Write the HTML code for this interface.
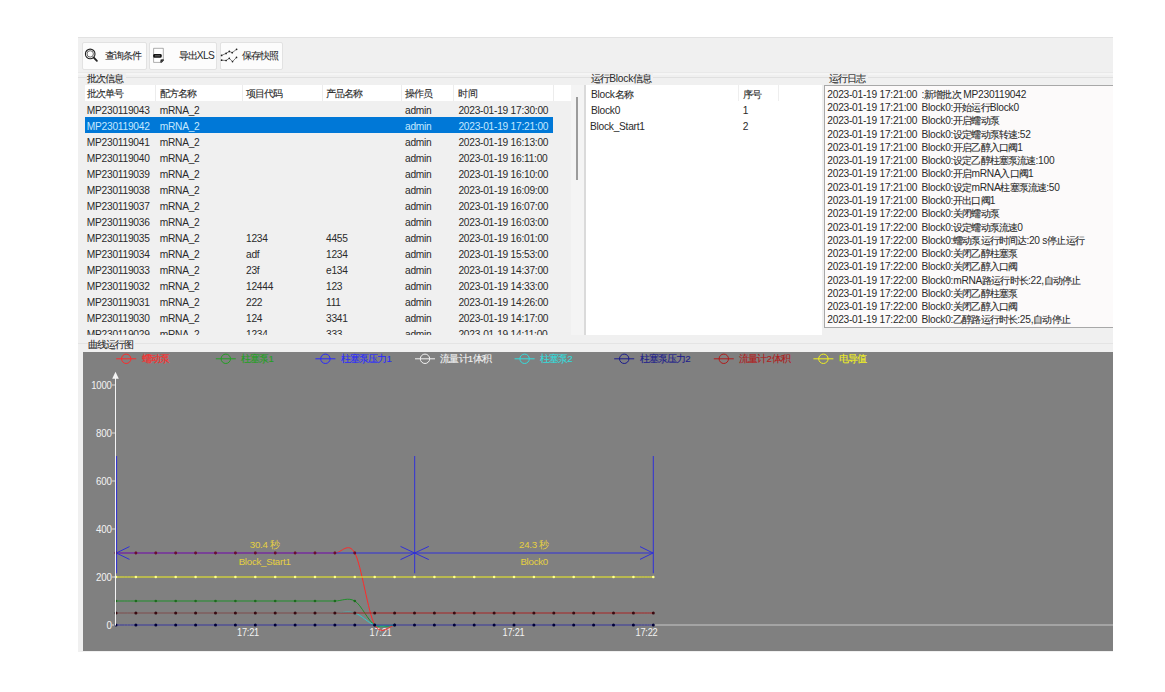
<!DOCTYPE html>
<html><head><meta charset="utf-8"><style>
html,body{margin:0;padding:0;background:#fff;width:1165px;height:692px;overflow:hidden;position:relative}
body{font-family:"Liberation Sans",sans-serif;font-size:10.2px;color:#2a2a2a;letter-spacing:-0.25px}
.t{}
.a{position:absolute}
.t{position:absolute;white-space:nowrap;line-height:12px;height:12px}
.c{font-size:10px;letter-spacing:-0.85px;-webkit-text-stroke:0.1px currentColor}
.win{position:absolute;left:78px;top:37px;width:1035px;height:615px;background:#f0f0f0}
.btn{position:absolute;top:41.5px;height:28px;background:#fcfcfc;border:1px solid #e2e2e2;border-radius:2px;box-sizing:border-box}
.hsep{position:absolute;top:85px;height:16px;width:1px;background:#ececec}
</style></head><body>
<div class="win"></div>
<div class="a" style="left:78px;top:37px;width:1035px;height:1px;background:#e2e2e2"></div>

<div class="btn" style="left:81.5px;width:65px"></div>
<div class="btn" style="left:148.6px;width:68.6px"></div>
<div class="btn" style="left:219.5px;width:63.5px"></div>
<div class="t" style="left:104.7px;top:49.9px;"><span class="c">查询条件</span></div>
<div class="t" style="left:178.5px;top:49.9px;letter-spacing:-0.6px"><span class="c">导出</span>XLS</div>
<div class="t" style="left:241.6px;top:49.9px;"><span class="c">保存快照</span></div>
<svg class="a" style="left:0;top:0" width="1165" height="692">
<circle cx="90.2" cy="53.9" r="4.8" fill="none" stroke="#222" stroke-width="1.1"/>
<circle cx="90.2" cy="53.9" r="3.2" fill="none" stroke="#444" stroke-width="0.8"/>
<line x1="93.8" y1="57.6" x2="96.9" y2="60.9" stroke="#222" stroke-width="1.8" stroke-linecap="round"/>
<path d="M153.6 48.3 H163.3 V59.3 L160.3 62.4 H153.6 Z" fill="#fff" stroke="#777" stroke-width="0.6"/>
<rect x="153.2" y="54" width="8.5" height="3.7" rx="1.2" fill="#161616"/>
<rect x="155" y="55.4" width="5" height="0.9" fill="#777"/>
<path d="M160.2 62.7 L163.7 59 L163.7 60.5 L161.6 62.7 Z" fill="#111"/>
<path d="M160.3 62.5 L163.4 59.3 L160.6 59.6 Z" fill="#222"/>
<polyline points="221.6,55.4 226.1,53.4 229.3,51.4 232.2,52.7 236.6,49.3" fill="none" stroke="#555" stroke-width="0.75"/>
<polyline points="221.6,60.2 226.1,60.5 229.3,58.3 232.5,61.6 236.5,57.4" fill="none" stroke="#555" stroke-width="0.75"/>
<circle cx="221.6" cy="55.4" r="0.85" fill="#222"/><circle cx="226.1" cy="53.4" r="0.85" fill="#222"/><circle cx="229.3" cy="51.4" r="0.85" fill="#222"/><circle cx="232.2" cy="52.7" r="0.85" fill="#222"/><circle cx="236.6" cy="49.3" r="0.85" fill="#222"/><circle cx="221.6" cy="60.2" r="0.85" fill="#222"/><circle cx="226.1" cy="60.5" r="0.85" fill="#222"/><circle cx="229.3" cy="58.3" r="0.85" fill="#222"/><circle cx="232.5" cy="61.6" r="0.85" fill="#222"/><circle cx="236.5" cy="57.4" r="0.85" fill="#222"/>
</svg>
<div class="a" style="left:78px;top:72px;width:1035px;height:1px;background:#e9e9e9"></div>
<div class="a" style="left:78px;top:73px;width:1035px;height:2px;background:#f5f5f5"></div>
<div class="a" style="left:78px;top:77px;width:1035px;height:1px;background:#e0e0e0"></div>
<div class="a" style="left:571px;top:85px;width:13px;height:250px;background:#f4f4f4"></div>
<div class="a" style="left:584px;top:85px;width:1.5px;height:250px;background:#dadada"></div>
<div class="a" style="left:78px;top:343px;width:1035px;height:1px;background:#e4e4e4"></div>
<div class="t" style="left:87px;top:72.6px;background:#f0f0f0;padding-right:2px"><span class="c">批次信息</span></div>
<div class="t" style="left:591px;top:73.1px;background:#f0f0f0;padding-right:2px"><span class="c">运行</span>Block<span class="c">信息</span></div>
<div class="t" style="left:829px;top:73.1px;background:#f0f0f0;padding-right:2px"><span class="c">运行日志</span></div>
<div class="a" style="left:85px;top:85px;width:486px;height:16px;background:#fff"></div>
<div class="hsep" style="left:155px"></div>
<div class="hsep" style="left:241.5px"></div>
<div class="hsep" style="left:321.5px"></div>
<div class="hsep" style="left:400.5px"></div>
<div class="hsep" style="left:453.2px"></div>
<div class="hsep" style="left:553px"></div>
<div class="t" style="left:86.8px;top:88.1px;"><span class="c">批次单号</span></div>
<div class="t" style="left:159.7px;top:88.1px;"><span class="c">配方名称</span></div>
<div class="t" style="left:246px;top:88.1px;"><span class="c">项目代码</span></div>
<div class="t" style="left:326px;top:88.1px;"><span class="c">产品名称</span></div>
<div class="t" style="left:405px;top:88.1px;"><span class="c">操作员</span></div>
<div class="t" style="left:458.4px;top:88.1px;"><span class="c">时间</span></div>
<div class="a" style="left:0;top:101px;width:1165px;height:234px;overflow:hidden">
<div class="t" style="left:86.8px;top:3.6px;">MP230119043</div>
<div class="t" style="left:159.7px;top:3.6px;">mRNA_2</div>
<div class="t" style="left:405px;top:3.6px;">admin</div>
<div class="t" style="left:458.4px;top:3.6px;">2023-01-19 17:30:00</div>
<div class="a" style="left:85px;top:16px;width:468.4px;height:16px;background:#0078d7"></div>
<div class="t" style="left:86.8px;top:19.6px;color:#c4e8ff;">MP230119042</div>
<div class="t" style="left:159.7px;top:19.6px;color:#c4e8ff;">mRNA_2</div>
<div class="t" style="left:405px;top:19.6px;color:#c4e8ff;">admin</div>
<div class="t" style="left:458.4px;top:19.6px;color:#c4e8ff;">2023-01-19 17:21:00</div>
<div class="t" style="left:86.8px;top:35.6px;">MP230119041</div>
<div class="t" style="left:159.7px;top:35.6px;">mRNA_2</div>
<div class="t" style="left:405px;top:35.6px;">admin</div>
<div class="t" style="left:458.4px;top:35.6px;">2023-01-19 16:13:00</div>
<div class="t" style="left:86.8px;top:51.6px;">MP230119040</div>
<div class="t" style="left:159.7px;top:51.6px;">mRNA_2</div>
<div class="t" style="left:405px;top:51.6px;">admin</div>
<div class="t" style="left:458.4px;top:51.6px;">2023-01-19 16:11:00</div>
<div class="t" style="left:86.8px;top:67.6px;">MP230119039</div>
<div class="t" style="left:159.7px;top:67.6px;">mRNA_2</div>
<div class="t" style="left:405px;top:67.6px;">admin</div>
<div class="t" style="left:458.4px;top:67.6px;">2023-01-19 16:10:00</div>
<div class="t" style="left:86.8px;top:83.6px;">MP230119038</div>
<div class="t" style="left:159.7px;top:83.6px;">mRNA_2</div>
<div class="t" style="left:405px;top:83.6px;">admin</div>
<div class="t" style="left:458.4px;top:83.6px;">2023-01-19 16:09:00</div>
<div class="t" style="left:86.8px;top:99.6px;">MP230119037</div>
<div class="t" style="left:159.7px;top:99.6px;">mRNA_2</div>
<div class="t" style="left:405px;top:99.6px;">admin</div>
<div class="t" style="left:458.4px;top:99.6px;">2023-01-19 16:07:00</div>
<div class="t" style="left:86.8px;top:115.6px;">MP230119036</div>
<div class="t" style="left:159.7px;top:115.6px;">mRNA_2</div>
<div class="t" style="left:405px;top:115.6px;">admin</div>
<div class="t" style="left:458.4px;top:115.6px;">2023-01-19 16:03:00</div>
<div class="t" style="left:86.8px;top:131.6px;">MP230119035</div>
<div class="t" style="left:159.7px;top:131.6px;">mRNA_2</div>
<div class="t" style="left:246px;top:131.6px;">1234</div>
<div class="t" style="left:326px;top:131.6px;">4455</div>
<div class="t" style="left:405px;top:131.6px;">admin</div>
<div class="t" style="left:458.4px;top:131.6px;">2023-01-19 16:01:00</div>
<div class="t" style="left:86.8px;top:147.6px;">MP230119034</div>
<div class="t" style="left:159.7px;top:147.6px;">mRNA_2</div>
<div class="t" style="left:246px;top:147.6px;">adf</div>
<div class="t" style="left:326px;top:147.6px;">1234</div>
<div class="t" style="left:405px;top:147.6px;">admin</div>
<div class="t" style="left:458.4px;top:147.6px;">2023-01-19 15:53:00</div>
<div class="t" style="left:86.8px;top:163.6px;">MP230119033</div>
<div class="t" style="left:159.7px;top:163.6px;">mRNA_2</div>
<div class="t" style="left:246px;top:163.6px;">23f</div>
<div class="t" style="left:326px;top:163.6px;">e134</div>
<div class="t" style="left:405px;top:163.6px;">admin</div>
<div class="t" style="left:458.4px;top:163.6px;">2023-01-19 14:37:00</div>
<div class="t" style="left:86.8px;top:179.6px;">MP230119032</div>
<div class="t" style="left:159.7px;top:179.6px;">mRNA_2</div>
<div class="t" style="left:246px;top:179.6px;">12444</div>
<div class="t" style="left:326px;top:179.6px;">123</div>
<div class="t" style="left:405px;top:179.6px;">admin</div>
<div class="t" style="left:458.4px;top:179.6px;">2023-01-19 14:33:00</div>
<div class="t" style="left:86.8px;top:195.6px;">MP230119031</div>
<div class="t" style="left:159.7px;top:195.6px;">mRNA_2</div>
<div class="t" style="left:246px;top:195.6px;">222</div>
<div class="t" style="left:326px;top:195.6px;">111</div>
<div class="t" style="left:405px;top:195.6px;">admin</div>
<div class="t" style="left:458.4px;top:195.6px;">2023-01-19 14:26:00</div>
<div class="t" style="left:86.8px;top:211.6px;">MP230119030</div>
<div class="t" style="left:159.7px;top:211.6px;">mRNA_2</div>
<div class="t" style="left:246px;top:211.6px;">124</div>
<div class="t" style="left:326px;top:211.6px;">3341</div>
<div class="t" style="left:405px;top:211.6px;">admin</div>
<div class="t" style="left:458.4px;top:211.6px;">2023-01-19 14:17:00</div>
<div class="t" style="left:86.8px;top:227.6px;">MP230119029</div>
<div class="t" style="left:159.7px;top:227.6px;">mRNA_2</div>
<div class="t" style="left:246px;top:227.6px;">1234</div>
<div class="t" style="left:326px;top:227.6px;">333</div>
<div class="t" style="left:405px;top:227.6px;">admin</div>
<div class="t" style="left:458.4px;top:227.6px;">2023-01-19 14:11:00</div>
</div>
<div class="a" style="left:576.3px;top:97px;width:1.7px;height:83px;background:#9c9c9c"></div>
<div class="a" style="left:585.7px;top:85px;width:236px;height:250px;background:#fff"></div>
<div class="a" style="left:738.4px;top:85px;width:1px;height:16px;background:#eee"></div>
<div class="a" style="left:778.3px;top:85px;width:1px;height:16px;background:#eee"></div>
<div class="t" style="left:591px;top:88.6px;">Block<span class="c">名称</span></div>
<div class="t" style="left:742.8px;top:88.6px;"><span class="c">序号</span></div>
<div class="t" style="left:591px;top:104.6px;">Block0</div>
<div class="t" style="left:742.8px;top:104.6px;">1</div>
<div class="t" style="left:590px;top:120.6px;">Block_Start1</div>
<div class="t" style="left:742.8px;top:120.6px;">2</div>
<div class="a" style="left:824px;top:85px;width:289px;height:242.5px;background:#fcfafa;border-left:1px solid #a8a8a8;border-top:1px solid #a8a8a8;border-bottom:1px solid #a8a8a8;box-sizing:border-box"></div>
<div class="t" style="left:827.3px;top:88.8px;">2023-01-19 17:21:00</div>
<div class="t" style="left:921.5px;top:88.8px;">:<span class="c">新增批次</span> MP230119042</div>
<div class="t" style="left:827.3px;top:102.1px;">2023-01-19 17:21:00</div>
<div class="t" style="left:921.5px;top:102.1px;">Block0:<span class="c">开始运行</span>Block0</div>
<div class="t" style="left:827.3px;top:115.3px;">2023-01-19 17:21:00</div>
<div class="t" style="left:921.5px;top:115.3px;">Block0:<span class="c">开启蠕动泵</span></div>
<div class="t" style="left:827.3px;top:128.6px;">2023-01-19 17:21:00</div>
<div class="t" style="left:921.5px;top:128.6px;">Block0:<span class="c">设定蠕动泵转速</span>:52</div>
<div class="t" style="left:827.3px;top:141.9px;">2023-01-19 17:21:00</div>
<div class="t" style="left:921.5px;top:141.9px;">Block0:<span class="c">开启乙醇入口阀</span>1</div>
<div class="t" style="left:827.3px;top:155.2px;">2023-01-19 17:21:00</div>
<div class="t" style="left:921.5px;top:155.2px;">Block0:<span class="c">设定乙醇柱塞泵流速</span>:100</div>
<div class="t" style="left:827.3px;top:168.4px;">2023-01-19 17:21:00</div>
<div class="t" style="left:921.5px;top:168.4px;">Block0:<span class="c">开启</span>mRNA<span class="c">入口阀</span>1</div>
<div class="t" style="left:827.3px;top:181.7px;">2023-01-19 17:21:00</div>
<div class="t" style="left:921.5px;top:181.7px;">Block0:<span class="c">设定</span>mRNA<span class="c">柱塞泵流速</span>:50</div>
<div class="t" style="left:827.3px;top:195.0px;">2023-01-19 17:21:00</div>
<div class="t" style="left:921.5px;top:195.0px;">Block0:<span class="c">开出口阀</span>1</div>
<div class="t" style="left:827.3px;top:208.2px;">2023-01-19 17:22:00</div>
<div class="t" style="left:921.5px;top:208.2px;">Block0:<span class="c">关闭蠕动泵</span></div>
<div class="t" style="left:827.3px;top:221.5px;">2023-01-19 17:22:00</div>
<div class="t" style="left:921.5px;top:221.5px;">Block0:<span class="c">设定蠕动泵流速</span>0</div>
<div class="t" style="left:827.3px;top:234.8px;">2023-01-19 17:22:00</div>
<div class="t" style="left:921.5px;top:234.8px;">Block0:<span class="c">蠕动泵运行时间达</span>:20 s<span class="c">停止运行</span></div>
<div class="t" style="left:827.3px;top:248.0px;">2023-01-19 17:22:00</div>
<div class="t" style="left:921.5px;top:248.0px;">Block0:<span class="c">关闭乙醇柱塞泵</span></div>
<div class="t" style="left:827.3px;top:261.3px;">2023-01-19 17:22:00</div>
<div class="t" style="left:921.5px;top:261.3px;">Block0:<span class="c">关闭乙醇入口阀</span></div>
<div class="t" style="left:827.3px;top:274.6px;">2023-01-19 17:22:00</div>
<div class="t" style="left:921.5px;top:274.6px;">Block0:mRNA<span class="c">路运行时长</span>:22,<span class="c">自动停止</span></div>
<div class="t" style="left:827.3px;top:287.8px;">2023-01-19 17:22:00</div>
<div class="t" style="left:921.5px;top:287.8px;">Block0:<span class="c">关闭乙醇柱塞泵</span></div>
<div class="t" style="left:827.3px;top:301.1px;">2023-01-19 17:22:00</div>
<div class="t" style="left:921.5px;top:301.1px;">Block0:<span class="c">关闭乙醇入口阀</span></div>
<div class="t" style="left:827.3px;top:314.4px;">2023-01-19 17:22:00</div>
<div class="t" style="left:921.5px;top:314.4px;">Block0:<span class="c">乙醇路运行时长</span>:25,<span class="c">自动停止</span></div>
<div class="t" style="left:87.7px;top:339.1px;background:#f0f0f0;padding-right:2px"><span class="c">曲线运行图</span></div>
<div class="a" style="left:83px;top:351.5px;width:1030px;height:299px;background:#808080"></div>
<svg class="a" style="left:0;top:0" width="1165" height="692">
<style>.c{font-size:10px;letter-spacing:-0.85px}</style>
<line x1="116.2" y1="358.8" x2="136.2" y2="358.8" stroke="#ff2a2a" stroke-width="1"/>
<circle cx="126.2" cy="358.8" r="4.7" fill="none" stroke="#ff2a2a" stroke-width="1"/>
<text x="141.5" y="362.0" fill="#ff2a2a" stroke="#ff2a2a" stroke-width="0.12" font-size="9.7"><tspan class="c">蠕动泵</tspan></text>
<line x1="215.8" y1="358.8" x2="235.8" y2="358.8" stroke="#22a022" stroke-width="1"/>
<circle cx="225.8" cy="358.8" r="4.7" fill="none" stroke="#22a022" stroke-width="1"/>
<text x="241.1" y="362.0" fill="#22a022" stroke="#22a022" stroke-width="0.12" font-size="9.7"><tspan class="c">柱塞泵</tspan>1</text>
<line x1="315.4" y1="358.8" x2="335.4" y2="358.8" stroke="#2a2aff" stroke-width="1"/>
<circle cx="325.4" cy="358.8" r="4.7" fill="none" stroke="#2a2aff" stroke-width="1"/>
<text x="340.7" y="362.0" fill="#2a2aff" stroke="#2a2aff" stroke-width="0.12" font-size="9.7"><tspan class="c">柱塞泵压力</tspan>1</text>
<line x1="415.0" y1="358.8" x2="435.0" y2="358.8" stroke="#f2f2f2" stroke-width="1"/>
<circle cx="425.0" cy="358.8" r="4.7" fill="none" stroke="#f2f2f2" stroke-width="1"/>
<text x="440.3" y="362.0" fill="#f2f2f2" stroke="#f2f2f2" stroke-width="0.12" font-size="9.7"><tspan class="c">流量计</tspan>1<tspan class="c">体积</tspan></text>
<line x1="514.6" y1="358.8" x2="534.6" y2="358.8" stroke="#33dddd" stroke-width="1"/>
<circle cx="524.6" cy="358.8" r="4.7" fill="none" stroke="#33dddd" stroke-width="1"/>
<text x="539.9" y="362.0" fill="#33dddd" stroke="#33dddd" stroke-width="0.12" font-size="9.7"><tspan class="c">柱塞泵</tspan>2</text>
<line x1="614.2" y1="358.8" x2="634.2" y2="358.8" stroke="#1c1c8c" stroke-width="1"/>
<circle cx="624.2" cy="358.8" r="4.7" fill="none" stroke="#1c1c8c" stroke-width="1"/>
<text x="639.5" y="362.0" fill="#1c1c8c" stroke="#1c1c8c" stroke-width="0.12" font-size="9.7"><tspan class="c">柱塞泵压力</tspan>2</text>
<line x1="713.8" y1="358.8" x2="733.8" y2="358.8" stroke="#b01c1c" stroke-width="1"/>
<circle cx="723.8" cy="358.8" r="4.7" fill="none" stroke="#b01c1c" stroke-width="1"/>
<text x="739.1" y="362.0" fill="#b01c1c" stroke="#b01c1c" stroke-width="0.12" font-size="9.7"><tspan class="c">流量计</tspan>2<tspan class="c">体积</tspan></text>
<line x1="813.4" y1="358.8" x2="833.4" y2="358.8" stroke="#f0f020" stroke-width="1"/>
<circle cx="823.4" cy="358.8" r="4.7" fill="none" stroke="#f0f020" stroke-width="1"/>
<text x="838.7" y="362.0" fill="#f0f020" stroke="#f0f020" stroke-width="0.12" font-size="9.7"><tspan class="c">电导值</tspan></text>
<path d="M115.5 371.7 L112.2 378.8 L118.8 378.8 Z" fill="#f4f4f4"/>
<line x1="115.5" y1="625" x2="1113" y2="625" stroke="#c8c8c8" stroke-width="1.2"/>
<line x1="112" y1="625" x2="115.5" y2="625" stroke="#d8d8d8" stroke-width="1"/>
<text x="106.4" y="628.9" fill="#f2f2f2" font-size="10.6" textLength="5.2" lengthAdjust="spacingAndGlyphs">0</text>
<line x1="112" y1="577" x2="115.5" y2="577" stroke="#d8d8d8" stroke-width="1"/>
<text x="96.0" y="580.9" fill="#f2f2f2" font-size="10.6" textLength="15.6" lengthAdjust="spacingAndGlyphs">200</text>
<line x1="112" y1="529" x2="115.5" y2="529" stroke="#d8d8d8" stroke-width="1"/>
<text x="96.0" y="532.9" fill="#f2f2f2" font-size="10.6" textLength="15.6" lengthAdjust="spacingAndGlyphs">400</text>
<line x1="112" y1="481" x2="115.5" y2="481" stroke="#d8d8d8" stroke-width="1"/>
<text x="96.0" y="484.9" fill="#f2f2f2" font-size="10.6" textLength="15.6" lengthAdjust="spacingAndGlyphs">600</text>
<line x1="112" y1="433" x2="115.5" y2="433" stroke="#d8d8d8" stroke-width="1"/>
<text x="96.0" y="436.9" fill="#f2f2f2" font-size="10.6" textLength="15.6" lengthAdjust="spacingAndGlyphs">800</text>
<line x1="112" y1="385" x2="115.5" y2="385" stroke="#d8d8d8" stroke-width="1"/>
<text x="91.2" y="388.9" fill="#f2f2f2" font-size="10.6" textLength="20.4" lengthAdjust="spacingAndGlyphs">1000</text>
<text x="237.0" y="636.1" fill="#f2f2f2" font-size="10.6" textLength="22" lengthAdjust="spacingAndGlyphs">17:21</text>
<text x="369.5" y="636.1" fill="#f2f2f2" font-size="10.6" textLength="22" lengthAdjust="spacingAndGlyphs">17:21</text>
<text x="502.5" y="636.1" fill="#f2f2f2" font-size="10.6" textLength="22" lengthAdjust="spacingAndGlyphs">17:21</text>
<text x="635.5" y="636.1" fill="#f2f2f2" font-size="10.6" textLength="22" lengthAdjust="spacingAndGlyphs">17:22</text>
<path d="M116.00 553.00 C119.32 553.00 129.27 553.00 135.90 553.00 C142.53 553.00 149.17 553.00 155.80 553.00 C162.43 553.00 169.07 553.00 175.70 553.00 C182.33 553.00 188.97 553.00 195.60 553.00 C202.23 553.00 208.87 553.00 215.50 553.00 C222.13 553.00 228.77 553.00 235.40 553.00 C242.03 553.00 248.67 553.00 255.30 553.00 C261.93 553.00 268.57 553.00 275.20 553.00 C281.83 553.00 288.47 553.00 295.10 553.00 C301.73 553.00 308.37 553.00 315.00 553.00 C321.63 553.00 328.27 553.00 334.90 553.00 C341.53 553.00 348.17 541.00 354.80 553.00 C361.43 565.00 368.07 613.00 374.70 625.00 C381.33 637.00 391.28 625.00 394.60 625.00" fill="none" stroke="#ff2a2a" stroke-width="1.0"/>
<circle cx="116.00" cy="553.00" r="1.3" fill="#7a1020"/>
<circle cx="135.90" cy="553.00" r="1.3" fill="#7a1020"/>
<circle cx="155.80" cy="553.00" r="1.3" fill="#7a1020"/>
<circle cx="175.70" cy="553.00" r="1.3" fill="#7a1020"/>
<circle cx="195.60" cy="553.00" r="1.3" fill="#7a1020"/>
<circle cx="215.50" cy="553.00" r="1.3" fill="#7a1020"/>
<circle cx="235.40" cy="553.00" r="1.3" fill="#7a1020"/>
<circle cx="255.30" cy="553.00" r="1.3" fill="#7a1020"/>
<circle cx="275.20" cy="553.00" r="1.3" fill="#7a1020"/>
<circle cx="295.10" cy="553.00" r="1.3" fill="#7a1020"/>
<circle cx="315.00" cy="553.00" r="1.3" fill="#7a1020"/>
<circle cx="334.90" cy="553.00" r="1.3" fill="#7a1020"/>
<circle cx="354.80" cy="553.00" r="1.3" fill="#7a1020"/>
<circle cx="374.70" cy="625.00" r="1.3" fill="#7a1020"/>
<circle cx="394.60" cy="625.00" r="1.3" fill="#7a1020"/>
<path d="M116.00 601.00 C119.32 601.00 129.27 601.00 135.90 601.00 C142.53 601.00 149.17 601.00 155.80 601.00 C162.43 601.00 169.07 601.00 175.70 601.00 C182.33 601.00 188.97 601.00 195.60 601.00 C202.23 601.00 208.87 601.00 215.50 601.00 C222.13 601.00 228.77 601.00 235.40 601.00 C242.03 601.00 248.67 601.00 255.30 601.00 C261.93 601.00 268.57 601.00 275.20 601.00 C281.83 601.00 288.47 601.00 295.10 601.00 C301.73 601.00 308.37 601.00 315.00 601.00 C321.63 601.00 328.27 601.00 334.90 601.00 C341.53 601.00 348.17 597.00 354.80 601.00 C361.43 605.00 368.07 621.00 374.70 625.00 C381.33 629.00 391.28 625.00 394.60 625.00" fill="none" stroke="#1f8f2a" stroke-width="1.0"/>
<circle cx="116.00" cy="601.00" r="1.3" fill="#1c6a1c"/>
<circle cx="135.90" cy="601.00" r="1.3" fill="#1c6a1c"/>
<circle cx="155.80" cy="601.00" r="1.3" fill="#1c6a1c"/>
<circle cx="175.70" cy="601.00" r="1.3" fill="#1c6a1c"/>
<circle cx="195.60" cy="601.00" r="1.3" fill="#1c6a1c"/>
<circle cx="215.50" cy="601.00" r="1.3" fill="#1c6a1c"/>
<circle cx="235.40" cy="601.00" r="1.3" fill="#1c6a1c"/>
<circle cx="255.30" cy="601.00" r="1.3" fill="#1c6a1c"/>
<circle cx="275.20" cy="601.00" r="1.3" fill="#1c6a1c"/>
<circle cx="295.10" cy="601.00" r="1.3" fill="#1c6a1c"/>
<circle cx="315.00" cy="601.00" r="1.3" fill="#1c6a1c"/>
<circle cx="334.90" cy="601.00" r="1.3" fill="#1c6a1c"/>
<circle cx="354.80" cy="601.00" r="1.3" fill="#1c6a1c"/>
<circle cx="374.70" cy="625.00" r="1.3" fill="#1c6a1c"/>
<circle cx="394.60" cy="625.00" r="1.3" fill="#1c6a1c"/>
<path d="M116.00 613.00 C119.32 613.00 129.27 613.00 135.90 613.00 C142.53 613.00 149.17 613.00 155.80 613.00 C162.43 613.00 169.07 613.00 175.70 613.00 C182.33 613.00 188.97 613.00 195.60 613.00 C202.23 613.00 208.87 613.00 215.50 613.00 C222.13 613.00 228.77 613.00 235.40 613.00 C242.03 613.00 248.67 613.00 255.30 613.00 C261.93 613.00 268.57 613.00 275.20 613.00 C281.83 613.00 288.47 613.00 295.10 613.00 C301.73 613.00 308.37 613.00 315.00 613.00 C321.63 613.00 328.27 613.00 334.90 613.00 C341.53 613.00 348.17 611.00 354.80 613.00 C361.43 615.00 368.07 623.00 374.70 625.00 C381.33 627.00 391.28 625.00 394.60 625.00" fill="none" stroke="#2ccfcf" stroke-width="1.0"/>
<circle cx="116.00" cy="613.00" r="1.3" fill="#1a8a8a"/>
<circle cx="135.90" cy="613.00" r="1.3" fill="#1a8a8a"/>
<circle cx="155.80" cy="613.00" r="1.3" fill="#1a8a8a"/>
<circle cx="175.70" cy="613.00" r="1.3" fill="#1a8a8a"/>
<circle cx="195.60" cy="613.00" r="1.3" fill="#1a8a8a"/>
<circle cx="215.50" cy="613.00" r="1.3" fill="#1a8a8a"/>
<circle cx="235.40" cy="613.00" r="1.3" fill="#1a8a8a"/>
<circle cx="255.30" cy="613.00" r="1.3" fill="#1a8a8a"/>
<circle cx="275.20" cy="613.00" r="1.3" fill="#1a8a8a"/>
<circle cx="295.10" cy="613.00" r="1.3" fill="#1a8a8a"/>
<circle cx="315.00" cy="613.00" r="1.3" fill="#1a8a8a"/>
<circle cx="334.90" cy="613.00" r="1.3" fill="#1a8a8a"/>
<circle cx="354.80" cy="613.00" r="1.3" fill="#1a8a8a"/>
<circle cx="374.70" cy="625.00" r="1.3" fill="#1a8a8a"/>
<circle cx="394.60" cy="625.00" r="1.3" fill="#1a8a8a"/>
<path d="M116.00 625.00 C119.32 625.00 129.27 625.00 135.90 625.00 C142.53 625.00 149.17 625.00 155.80 625.00 C162.43 625.00 169.07 625.00 175.70 625.00 C182.33 625.00 188.97 625.00 195.60 625.00 C202.23 625.00 208.87 625.00 215.50 625.00 C222.13 625.00 228.77 625.00 235.40 625.00 C242.03 625.00 248.67 625.00 255.30 625.00 C261.93 625.00 268.57 625.00 275.20 625.00 C281.83 625.00 288.47 625.00 295.10 625.00 C301.73 625.00 308.37 625.00 315.00 625.00 C321.63 625.00 328.27 625.00 334.90 625.00 C341.53 625.00 348.17 625.00 354.80 625.00 C361.43 625.00 368.07 625.00 374.70 625.00 C381.33 625.00 387.97 625.00 394.60 625.00 C401.23 625.00 407.87 625.00 414.50 625.00 C421.13 625.00 427.77 625.00 434.40 625.00 C441.03 625.00 447.67 625.00 454.30 625.00 C460.93 625.00 467.57 625.00 474.20 625.00 C480.83 625.00 487.47 625.00 494.10 625.00 C500.73 625.00 507.37 625.00 514.00 625.00 C520.63 625.00 527.27 625.00 533.90 625.00 C540.53 625.00 547.17 625.00 553.80 625.00 C560.43 625.00 567.07 625.00 573.70 625.00 C580.33 625.00 586.97 625.00 593.60 625.00 C600.23 625.00 606.87 625.00 613.50 625.00 C620.13 625.00 626.77 625.00 633.40 625.00 C640.03 625.00 649.98 625.00 653.30 625.00" fill="none" stroke="#14147a" stroke-width="1.0"/>
<circle cx="116.00" cy="625.00" r="1.5" fill="#000038"/>
<circle cx="135.90" cy="625.00" r="1.5" fill="#000038"/>
<circle cx="155.80" cy="625.00" r="1.5" fill="#000038"/>
<circle cx="175.70" cy="625.00" r="1.5" fill="#000038"/>
<circle cx="195.60" cy="625.00" r="1.5" fill="#000038"/>
<circle cx="215.50" cy="625.00" r="1.5" fill="#000038"/>
<circle cx="235.40" cy="625.00" r="1.5" fill="#000038"/>
<circle cx="255.30" cy="625.00" r="1.5" fill="#000038"/>
<circle cx="275.20" cy="625.00" r="1.5" fill="#000038"/>
<circle cx="295.10" cy="625.00" r="1.5" fill="#000038"/>
<circle cx="315.00" cy="625.00" r="1.5" fill="#000038"/>
<circle cx="334.90" cy="625.00" r="1.5" fill="#000038"/>
<circle cx="354.80" cy="625.00" r="1.5" fill="#000038"/>
<circle cx="374.70" cy="625.00" r="1.5" fill="#000038"/>
<circle cx="394.60" cy="625.00" r="1.5" fill="#000038"/>
<circle cx="414.50" cy="625.00" r="1.5" fill="#000038"/>
<circle cx="434.40" cy="625.00" r="1.5" fill="#000038"/>
<circle cx="454.30" cy="625.00" r="1.5" fill="#000038"/>
<circle cx="474.20" cy="625.00" r="1.5" fill="#000038"/>
<circle cx="494.10" cy="625.00" r="1.5" fill="#000038"/>
<circle cx="514.00" cy="625.00" r="1.5" fill="#000038"/>
<circle cx="533.90" cy="625.00" r="1.5" fill="#000038"/>
<circle cx="553.80" cy="625.00" r="1.5" fill="#000038"/>
<circle cx="573.70" cy="625.00" r="1.5" fill="#000038"/>
<circle cx="593.60" cy="625.00" r="1.5" fill="#000038"/>
<circle cx="613.50" cy="625.00" r="1.5" fill="#000038"/>
<circle cx="633.40" cy="625.00" r="1.5" fill="#000038"/>
<circle cx="653.30" cy="625.00" r="1.5" fill="#000038"/>
<path d="M116.00 613.00 C119.32 613.00 129.27 613.00 135.90 613.00 C142.53 613.00 149.17 613.00 155.80 613.00 C162.43 613.00 169.07 613.00 175.70 613.00 C182.33 613.00 188.97 613.00 195.60 613.00 C202.23 613.00 208.87 613.00 215.50 613.00 C222.13 613.00 228.77 613.00 235.40 613.00 C242.03 613.00 248.67 613.00 255.30 613.00 C261.93 613.00 268.57 613.00 275.20 613.00 C281.83 613.00 288.47 613.00 295.10 613.00 C301.73 613.00 308.37 613.00 315.00 613.00 C321.63 613.00 328.27 613.00 334.90 613.00 C341.53 613.00 348.17 613.00 354.80 613.00 C361.43 613.00 368.07 613.00 374.70 613.00 C381.33 613.00 387.97 613.00 394.60 613.00 C401.23 613.00 407.87 613.00 414.50 613.00 C421.13 613.00 427.77 613.00 434.40 613.00 C441.03 613.00 447.67 613.00 454.30 613.00 C460.93 613.00 467.57 613.00 474.20 613.00 C480.83 613.00 487.47 613.00 494.10 613.00 C500.73 613.00 507.37 613.00 514.00 613.00 C520.63 613.00 527.27 613.00 533.90 613.00 C540.53 613.00 547.17 613.00 553.80 613.00 C560.43 613.00 567.07 613.00 573.70 613.00 C580.33 613.00 586.97 613.00 593.60 613.00 C600.23 613.00 606.87 613.00 613.50 613.00 C620.13 613.00 626.77 613.00 633.40 613.00 C640.03 613.00 649.98 613.00 653.30 613.00" fill="none" stroke="#a82424" stroke-width="1.0"/>
<circle cx="116.00" cy="613.00" r="1.5" fill="#3a0a10"/>
<circle cx="135.90" cy="613.00" r="1.5" fill="#3a0a10"/>
<circle cx="155.80" cy="613.00" r="1.5" fill="#3a0a10"/>
<circle cx="175.70" cy="613.00" r="1.5" fill="#3a0a10"/>
<circle cx="195.60" cy="613.00" r="1.5" fill="#3a0a10"/>
<circle cx="215.50" cy="613.00" r="1.5" fill="#3a0a10"/>
<circle cx="235.40" cy="613.00" r="1.5" fill="#3a0a10"/>
<circle cx="255.30" cy="613.00" r="1.5" fill="#3a0a10"/>
<circle cx="275.20" cy="613.00" r="1.5" fill="#3a0a10"/>
<circle cx="295.10" cy="613.00" r="1.5" fill="#3a0a10"/>
<circle cx="315.00" cy="613.00" r="1.5" fill="#3a0a10"/>
<circle cx="334.90" cy="613.00" r="1.5" fill="#3a0a10"/>
<circle cx="354.80" cy="613.00" r="1.5" fill="#3a0a10"/>
<circle cx="374.70" cy="613.00" r="1.5" fill="#3a0a10"/>
<circle cx="394.60" cy="613.00" r="1.5" fill="#3a0a10"/>
<circle cx="414.50" cy="613.00" r="1.5" fill="#3a0a10"/>
<circle cx="434.40" cy="613.00" r="1.5" fill="#3a0a10"/>
<circle cx="454.30" cy="613.00" r="1.5" fill="#3a0a10"/>
<circle cx="474.20" cy="613.00" r="1.5" fill="#3a0a10"/>
<circle cx="494.10" cy="613.00" r="1.5" fill="#3a0a10"/>
<circle cx="514.00" cy="613.00" r="1.5" fill="#3a0a10"/>
<circle cx="533.90" cy="613.00" r="1.5" fill="#3a0a10"/>
<circle cx="553.80" cy="613.00" r="1.5" fill="#3a0a10"/>
<circle cx="573.70" cy="613.00" r="1.5" fill="#3a0a10"/>
<circle cx="593.60" cy="613.00" r="1.5" fill="#3a0a10"/>
<circle cx="613.50" cy="613.00" r="1.5" fill="#3a0a10"/>
<circle cx="633.40" cy="613.00" r="1.5" fill="#3a0a10"/>
<circle cx="653.30" cy="613.00" r="1.5" fill="#3a0a10"/>
<path d="M116.00 577.00 C119.32 577.00 129.27 577.00 135.90 577.00 C142.53 577.00 149.17 577.00 155.80 577.00 C162.43 577.00 169.07 577.00 175.70 577.00 C182.33 577.00 188.97 577.00 195.60 577.00 C202.23 577.00 208.87 577.00 215.50 577.00 C222.13 577.00 228.77 577.00 235.40 577.00 C242.03 577.00 248.67 577.00 255.30 577.00 C261.93 577.00 268.57 577.00 275.20 577.00 C281.83 577.00 288.47 577.00 295.10 577.00 C301.73 577.00 308.37 577.00 315.00 577.00 C321.63 577.00 328.27 577.00 334.90 577.00 C341.53 577.00 348.17 577.00 354.80 577.00 C361.43 577.00 368.07 577.00 374.70 577.00 C381.33 577.00 387.97 577.00 394.60 577.00 C401.23 577.00 407.87 577.00 414.50 577.00 C421.13 577.00 427.77 577.00 434.40 577.00 C441.03 577.00 447.67 577.00 454.30 577.00 C460.93 577.00 467.57 577.00 474.20 577.00 C480.83 577.00 487.47 577.00 494.10 577.00 C500.73 577.00 507.37 577.00 514.00 577.00 C520.63 577.00 527.27 577.00 533.90 577.00 C540.53 577.00 547.17 577.00 553.80 577.00 C560.43 577.00 567.07 577.00 573.70 577.00 C580.33 577.00 586.97 577.00 593.60 577.00 C600.23 577.00 606.87 577.00 613.50 577.00 C620.13 577.00 626.77 577.00 633.40 577.00 C640.03 577.00 649.98 577.00 653.30 577.00" fill="none" stroke="#f0f020" stroke-width="1.0"/>
<circle cx="116.00" cy="577.00" r="1.3" fill="#ffff90"/>
<circle cx="135.90" cy="577.00" r="1.3" fill="#ffff90"/>
<circle cx="155.80" cy="577.00" r="1.3" fill="#ffff90"/>
<circle cx="175.70" cy="577.00" r="1.3" fill="#ffff90"/>
<circle cx="195.60" cy="577.00" r="1.3" fill="#ffff90"/>
<circle cx="215.50" cy="577.00" r="1.3" fill="#ffff90"/>
<circle cx="235.40" cy="577.00" r="1.3" fill="#ffff90"/>
<circle cx="255.30" cy="577.00" r="1.3" fill="#ffff90"/>
<circle cx="275.20" cy="577.00" r="1.3" fill="#ffff90"/>
<circle cx="295.10" cy="577.00" r="1.3" fill="#ffff90"/>
<circle cx="315.00" cy="577.00" r="1.3" fill="#ffff90"/>
<circle cx="334.90" cy="577.00" r="1.3" fill="#ffff90"/>
<circle cx="354.80" cy="577.00" r="1.3" fill="#ffff90"/>
<circle cx="374.70" cy="577.00" r="1.3" fill="#ffff90"/>
<circle cx="394.60" cy="577.00" r="1.3" fill="#ffff90"/>
<circle cx="414.50" cy="577.00" r="1.3" fill="#ffff90"/>
<circle cx="434.40" cy="577.00" r="1.3" fill="#ffff90"/>
<circle cx="454.30" cy="577.00" r="1.3" fill="#ffff90"/>
<circle cx="474.20" cy="577.00" r="1.3" fill="#ffff90"/>
<circle cx="494.10" cy="577.00" r="1.3" fill="#ffff90"/>
<circle cx="514.00" cy="577.00" r="1.3" fill="#ffff90"/>
<circle cx="533.90" cy="577.00" r="1.3" fill="#ffff90"/>
<circle cx="553.80" cy="577.00" r="1.3" fill="#ffff90"/>
<circle cx="573.70" cy="577.00" r="1.3" fill="#ffff90"/>
<circle cx="593.60" cy="577.00" r="1.3" fill="#ffff90"/>
<circle cx="613.50" cy="577.00" r="1.3" fill="#ffff90"/>
<circle cx="633.40" cy="577.00" r="1.3" fill="#ffff90"/>
<circle cx="653.30" cy="577.00" r="1.3" fill="#ffff90"/>
<line x1="116.6" y1="456" x2="116.6" y2="573.3" stroke="#3030d8" stroke-width="1"/>
<line x1="414.7" y1="456" x2="414.7" y2="573.3" stroke="#3030d8" stroke-width="1"/>
<line x1="653.3" y1="456" x2="653.3" y2="573.3" stroke="#3030d8" stroke-width="1"/>
<line x1="116" y1="553" x2="653.3" y2="553" stroke="#3030d8" stroke-width="1.15"/>
<circle cx="116.00" cy="553.00" r="1.4" fill="#6a1030"/>
<circle cx="135.90" cy="553.00" r="1.4" fill="#6a1030"/>
<circle cx="155.80" cy="553.00" r="1.4" fill="#6a1030"/>
<circle cx="175.70" cy="553.00" r="1.4" fill="#6a1030"/>
<circle cx="195.60" cy="553.00" r="1.4" fill="#6a1030"/>
<circle cx="215.50" cy="553.00" r="1.4" fill="#6a1030"/>
<circle cx="235.40" cy="553.00" r="1.4" fill="#6a1030"/>
<circle cx="255.30" cy="553.00" r="1.4" fill="#6a1030"/>
<circle cx="275.20" cy="553.00" r="1.4" fill="#6a1030"/>
<circle cx="295.10" cy="553.00" r="1.4" fill="#6a1030"/>
<circle cx="315.00" cy="553.00" r="1.4" fill="#6a1030"/>
<circle cx="334.90" cy="553.00" r="1.4" fill="#6a1030"/>
<circle cx="354.80" cy="553.00" r="1.4" fill="#6a1030"/>
<path d="M129.5 546.6 L116.3 553 L129.5 559.4" fill="none" stroke="#3030d8" stroke-width="1"/>
<path d="M400.5 546.4 L428.8 559.6 M400.5 559.6 L428.8 546.4" fill="none" stroke="#3030d8" stroke-width="1"/>
<path d="M640 546.6 L653 553 L640 559.4" fill="none" stroke="#3030d8" stroke-width="1"/>
<line x1="115.5" y1="378" x2="115.5" y2="625.5" stroke="#f4f4f4" stroke-width="1"/>
<text x="264.5" y="548.3" fill="#e6d040" font-size="9.7" text-anchor="middle">30.4 <tspan class="c">秒</tspan></text>
<text x="264.6" y="565" fill="#e6d040" font-size="9.7" text-anchor="middle">Block_Start1</text>
<text x="533.8" y="548.3" fill="#e6d040" font-size="9.7" text-anchor="middle">24.3 <tspan class="c">秒</tspan></text>
<text x="534.2" y="565" fill="#e6d040" font-size="9.7" text-anchor="middle">Block0</text>
</svg>
</body></html>
